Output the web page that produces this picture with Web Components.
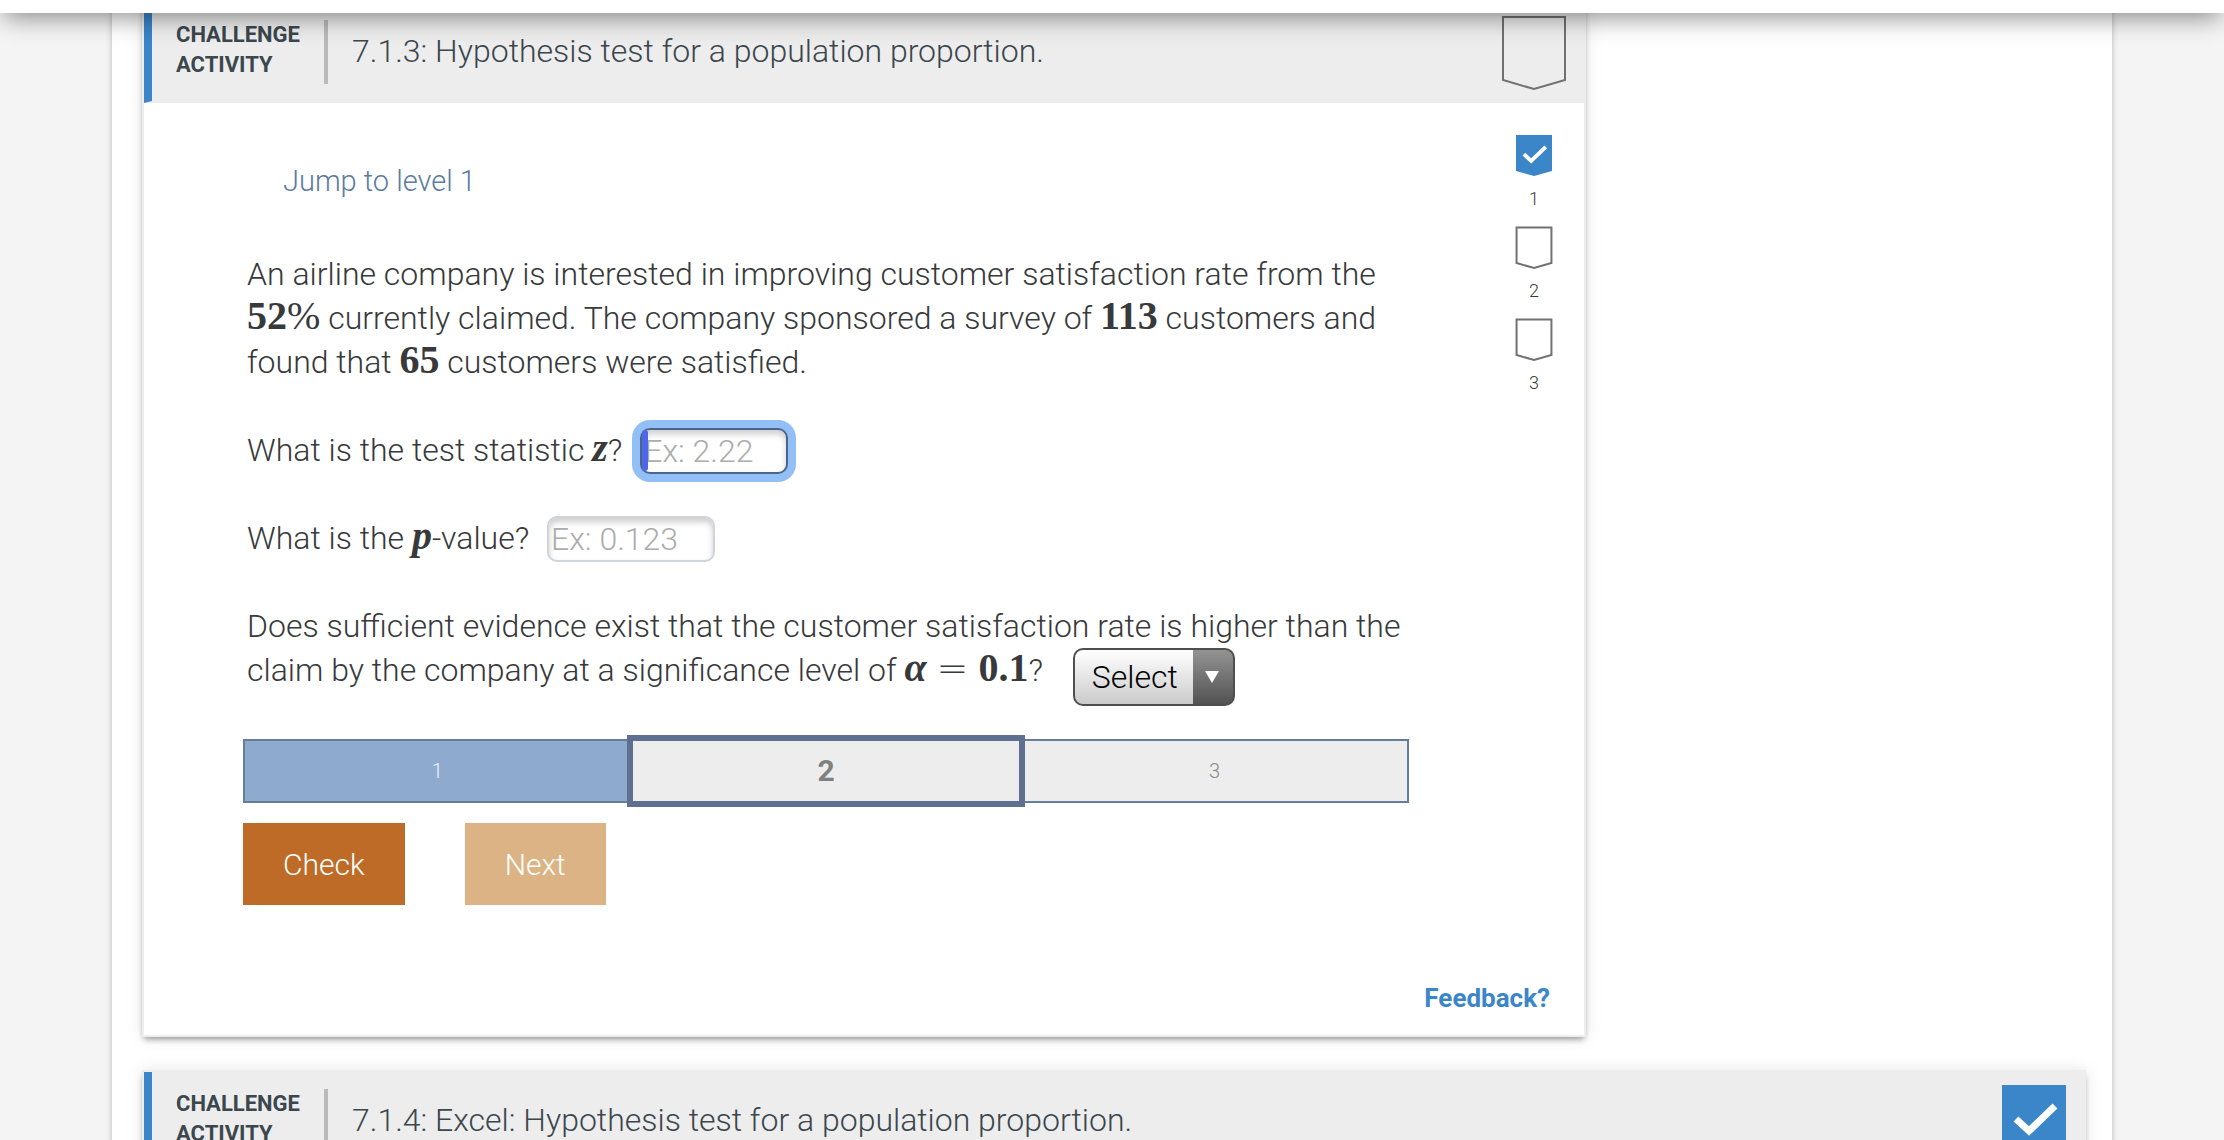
<!DOCTYPE html>
<html lang="en">
<head>
<meta charset="utf-8">
<meta name="viewport" content="width=device-width, initial-scale=1">
<title>7.1 Challenge activities</title>
<style>
    html {
        height: 100%;
        overflow: hidden;
    }
    body {
        display: flow-root;
        margin: 0;
        height: 100%;
        overflow: hidden;
        background: #f4f4f4;
        color: #37393b;
        font-family: Roboto, "Liberation Sans", sans-serif;
        font-weight: 300;
        font-size: 32px;
        line-height: 44px;
    }
</style>
</head>
<body>

<top-bar></top-bar>
<page-sheet>
    <challenge-activity number="7.1.3" name="Hypothesis test for a population proportion." narrow>
        <question-set></question-set>
    </challenge-activity>
    <challenge-activity number="7.1.4" name="Excel: Hypothesis test for a population proportion." completed></challenge-activity>
</page-sheet>

<script>
class TopBar extends HTMLElement {
    constructor() {
        super();
        this.attachShadow({ mode: "open" });
        // only the lower edge of the bar stays in view
        this.shadowRoot.innerHTML = `
            <style>
                :host {
                    display: block;
                    position: relative;
                    z-index: 10;
                    height: 93px;
                    margin-top: -80px;
                    background: #fff;
                    box-shadow: 0 8px 24px -4px rgba(0, 0, 0, 0.45);
                }
            </style>
        `;
    }
}

class PageSheet extends HTMLElement {
    constructor() {
        super();
        this.attachShadow({ mode: "open" });
        // the sheet is scrolled, so its first card starts under the top bar
        this.shadowRoot.innerHTML = `
            <style>
                :host {
                    display: flex;
                    flex-direction: column;
                    gap: 33px;
                    box-sizing: border-box;
                    max-width: 2000px;
                    min-height: 100%;
                    margin: -12px auto 0;
                    padding: 0 26px 0 30px;
                    background: #fff;
                    box-shadow: 0 2px 6px rgba(0, 0, 0, 0.25);
                }
            </style>
            <slot></slot>
        `;
    }
}

class ActivityBadge extends HTMLElement {
    constructor() {
        super();
        this.attachShadow({ mode: "open" });
    }

    connectedCallback() {
        const done = this.hasAttribute("done");
        this.shadowRoot.innerHTML = `
            <style>
                :host { display: block; width: 64px; flex: none; }
                :host([small]) { width: 36px; }
                svg { display: block; width: 100%; overflow: visible; }
                .outline { fill: none; stroke: #717171; stroke-width: 2; vector-effect: non-scaling-stroke; }
                .filled { fill: #3b85c9; }
                .check { fill: none; stroke: #fff; stroke-width: 7; }
            </style>
            <svg viewBox="0 0 64 74" aria-hidden="true">
                ${done
                    ? `<path class="filled" d="M0 0H64V64L32 73L0 64Z"/><path class="check" d="M14 34L27 46L53 21"/>`
                    : `<path class="outline" d="M1 1H63V64L32 73L1 64Z"/>`}
            </svg>
        `;
    }
}

class ChallengeActivity extends HTMLElement {
    constructor() {
        super();
        this.attachShadow({ mode: "open" });
        this.shadowRoot.innerHTML = `
            <style>
                :host {
                    display: block;
                    box-sizing: border-box;
                    border: 2px solid #ededed;
                    background: #fff;
                    box-shadow: 0 4px 6px -2px rgba(0, 0, 0, 0.4), 0 0 16px rgba(0, 0, 0, 0.1);
                }
                :host([narrow]) { max-width: 1444px; }
                header {
                    display: flex;
                    align-items: flex-start;
                    box-sizing: border-box;
                    min-height: 100px;
                    padding: 13px 18px 0 24px;
                    border-left: 8px solid #3b85c9;
                    border-bottom: 2px solid #ededed;
                    background: #ededed;
                    color: #3b474d;
                }
                .type {
                    box-sizing: border-box;
                    width: 148px;
                    padding-top: 4px;
                    font-size: 22px;
                    font-weight: 700;
                    line-height: 30px;
                    text-transform: uppercase;
                }
                h2 {
                    flex: 1;
                    margin: 4px 0 0;
                    padding: 0 24px 2px;
                    border-left: 4px solid #bababa;
                    font-size: 32px;
                    font-weight: 300;
                    line-height: 62px;
                }
            </style>
            <header>
                <div class="type">Challenge<br>activity</div>
                <h2 id="title"></h2>
                <span id="badge"></span>
            </header>
            <slot></slot>
        `;
    }

    connectedCallback() {
        this.shadowRoot.getElementById("title").textContent =
            this.getAttribute("number") + ": " + this.getAttribute("name");

        const badge = document.createElement("activity-badge");
        if (this.hasAttribute("completed")) {
            badge.setAttribute("done", "");
        }
        this.shadowRoot.getElementById("badge").replaceWith(badge);
    }
}

class LevelRail extends HTMLElement {
    constructor() {
        super();
        this.attachShadow({ mode: "open" });
        const levels = [
            { number: 1, done: true },
            { number: 2, done: false },
            { number: 3, done: false }
        ];
        this.shadowRoot.innerHTML = `
            <style>
                :host { display: block; flex: none; width: 100px; padding-top: 32px; }
                ol {
                    display: flex;
                    flex-direction: column;
                    gap: 16px;
                    margin: 0;
                    padding: 0;
                    list-style: none;
                }
                li {
                    display: flex;
                    flex-direction: column;
                    align-items: center;
                    gap: 10px;
                    font-size: 18px;
                    line-height: 24px;
                }
                activity-badge { height: 42px; }
            </style>
            <ol>
                ${levels.map(l => `<li><activity-badge small ${l.done ? "done" : ""}></activity-badge><span>${l.number}</span></li>`).join("")}
            </ol>
        `;
    }
}

class MathTerm extends HTMLElement {
    constructor() {
        super();
        this.attachShadow({ mode: "open" });
        // no white space around the slot, it would show inside the line
        this.shadowRoot.innerHTML = `<style>
                :host {
                    font-family: "Liberation Serif", serif;
                    font-size: 40px;
                    font-weight: 700;
                    line-height: 38px;
                }
                :host([variable]) { font-style: italic; }
                :host([sign]) { font-weight: 400; }
                :host([relation]) {
                    margin: 0 10px;
                    font-family: "DejaVu Sans", sans-serif;
                    font-size: 38px;
                    font-weight: 200;
                }
            </style><slot></slot>`;
    }
}

class LevelProgress extends HTMLElement {
    constructor() {
        super();
        this.attachShadow({ mode: "open" });
        this.shadowRoot.innerHTML = `
            <style>
                :host {
                    display: grid;
                    grid-template-columns: repeat(3, 1fr);
                    grid-template-rows: 64px;
                    font-size: 20px;
                }
                div {
                    display: flex;
                    align-items: center;
                    justify-content: center;
                    box-sizing: border-box;
                    border: 2px solid #647d98;
                    background: #ededed;
                    color: #8a8a8a;
                }
                .done {
                    background: #8faacf;
                    color: #eef2f8;
                }
                .current {
                    position: relative;
                    margin: -4px -5px;
                    border: 6px solid #5f6f8f;
                    color: #808080;
                    font-size: 30px;
                    font-weight: 700;
                }
            </style>
            <div class="done">1</div>
            <div class="current">2</div>
            <div>3</div>
        `;
    }
}

class QuestionSet extends HTMLElement {
    constructor() {
        super();
        this.attachShadow({ mode: "open" });
        this.shadowRoot.innerHTML = `
            <style>
                :host { display: block; padding-bottom: 21px; }
                .body { display: flex; }
                .content {
                    flex: 1;
                    min-width: 0;
                    padding: 36px 75px 0 99px;
                }
                .text { margin: 31px 0 33px; padding-left: 4px; }
                p { margin: 0 0 44px; }
                p:last-child { margin: 0; }
                button {
                    display: block;
                    padding: 20px 40px 18px;
                    border: 0;
                    background: none;
                    color: #fff;
                    font: inherit;
                    font-size: 30px;
                }
                .jump { color: #5b7ba0; font-size: 29px; }
                .check { background: #bd6b27; }
                .next { background: #dcb384; }
                .buttons { display: flex; gap: 60px; margin-top: 20px; }
                .field {
                    display: inline-block;
                    position: relative;
                    height: 46px;
                    margin: 0 0 -2px 10px;
                    vertical-align: top;
                }
                input {
                    display: block;
                    box-sizing: border-box;
                    width: 148px;
                    height: 46px;
                    padding: 0 2px;
                    border: 2px solid #d0d4d8;
                    border-radius: 10px;
                    outline: 0;
                    background: #fff;
                    box-shadow: inset 0 4px 6px rgba(0, 0, 0, 0.2);
                    color: inherit;
                    font: inherit;
                }
                .wide input { width: 168px; }
                input::placeholder { color: #acacac; opacity: 1; }
                .active input {
                    border-color: #4a658c;
                    box-shadow: 0 0 0 8px #93bff7, inset 0 4px 6px rgba(0, 0, 0, 0.2);
                }
                .caret {
                    position: absolute;
                    left: 2px;
                    top: 2px;
                    width: 6px;
                    height: 41px;
                    border-radius: 3px;
                    background: #4f66e6;
                }
                .select {
                    display: inline-grid;
                    margin-left: 22px;
                    vertical-align: top;
                }
                .select > * { grid-area: 1 / 1; }
                select {
                    appearance: none;
                    box-sizing: border-box;
                    width: 162px;
                    height: 58px;
                    padding: 0 48px 0 17px;
                    border: 2px solid #4f4f4f;
                    border-radius: 10px;
                    background:
                        linear-gradient(#939393, #535353) right / 40px 100% no-repeat,
                        linear-gradient(#fff, #cbcbcb);
                    color: #000;
                    font: inherit;
                }
                .select svg {
                    align-self: center;
                    justify-self: end;
                    margin-right: 16px;
                    width: 14px;
                    height: 14px;
                    pointer-events: none;
                }
                .feedback {
                    display: flex;
                    justify-content: flex-end;
                    margin-top: 77px;
                    padding-right: 34px;
                    font-size: 26px;
                    font-weight: 700;
                    line-height: 32px;
                }
                .feedback a { color: #3b85c9; text-decoration: none; }
            </style>
            <div class="body">
                <div class="content">
                    <button class="jump" type="button">Jump to level 1</button>
                    <div class="text">
                        <p>An airline company is interested in improving customer satisfaction rate from the<br>
                            <math-term>52</math-term><math-term sign>%</math-term> currently claimed. The company sponsored a survey of <math-term>113</math-term> customers and<br>
                            found that <math-term>65</math-term> customers were satisfied.</p>
                        <p><label for="statistic">What is the test statistic <math-term variable>z</math-term>?</label>
                            <span class="field active"><input id="statistic" type="text" placeholder="Ex: 2.22"><span class="caret"></span></span></p>
                        <p><label for="pvalue">What is the <math-term variable>p</math-term>-value?</label>
                            <span class="field wide"><input id="pvalue" type="text" placeholder="Ex: 0.123"></span></p>
                        <p><label for="evidence">Does sufficient evidence exist that the customer satisfaction rate is higher than the<br>
                            claim by the company at a significance level of <math-term variable>α</math-term><math-term relation>=</math-term><math-term>0.1</math-term>?</label>
                            <span class="select">
                                <select id="evidence"><option>Select</option><option>Yes</option><option>No</option></select>
                                <svg viewBox="0 0 14 14" aria-hidden="true"><path d="M0 1H14L7 13Z" fill="#fff"/></svg>
                            </span></p>
                    </div>
                    <level-progress></level-progress>
                    <div class="buttons">
                        <button class="check" type="button">Check</button>
                        <button class="next" type="button">Next</button>
                    </div>
                </div>
                <level-rail></level-rail>
            </div>
            <div class="feedback"><a href="#feedback">Feedback?</a></div>
        `;
    }
}

customElements.define("top-bar", TopBar);
customElements.define("page-sheet", PageSheet);
customElements.define("activity-badge", ActivityBadge);
customElements.define("challenge-activity", ChallengeActivity);
customElements.define("level-rail", LevelRail);
customElements.define("math-term", MathTerm);
customElements.define("level-progress", LevelProgress);
customElements.define("question-set", QuestionSet);
</script>
</body>
</html>
